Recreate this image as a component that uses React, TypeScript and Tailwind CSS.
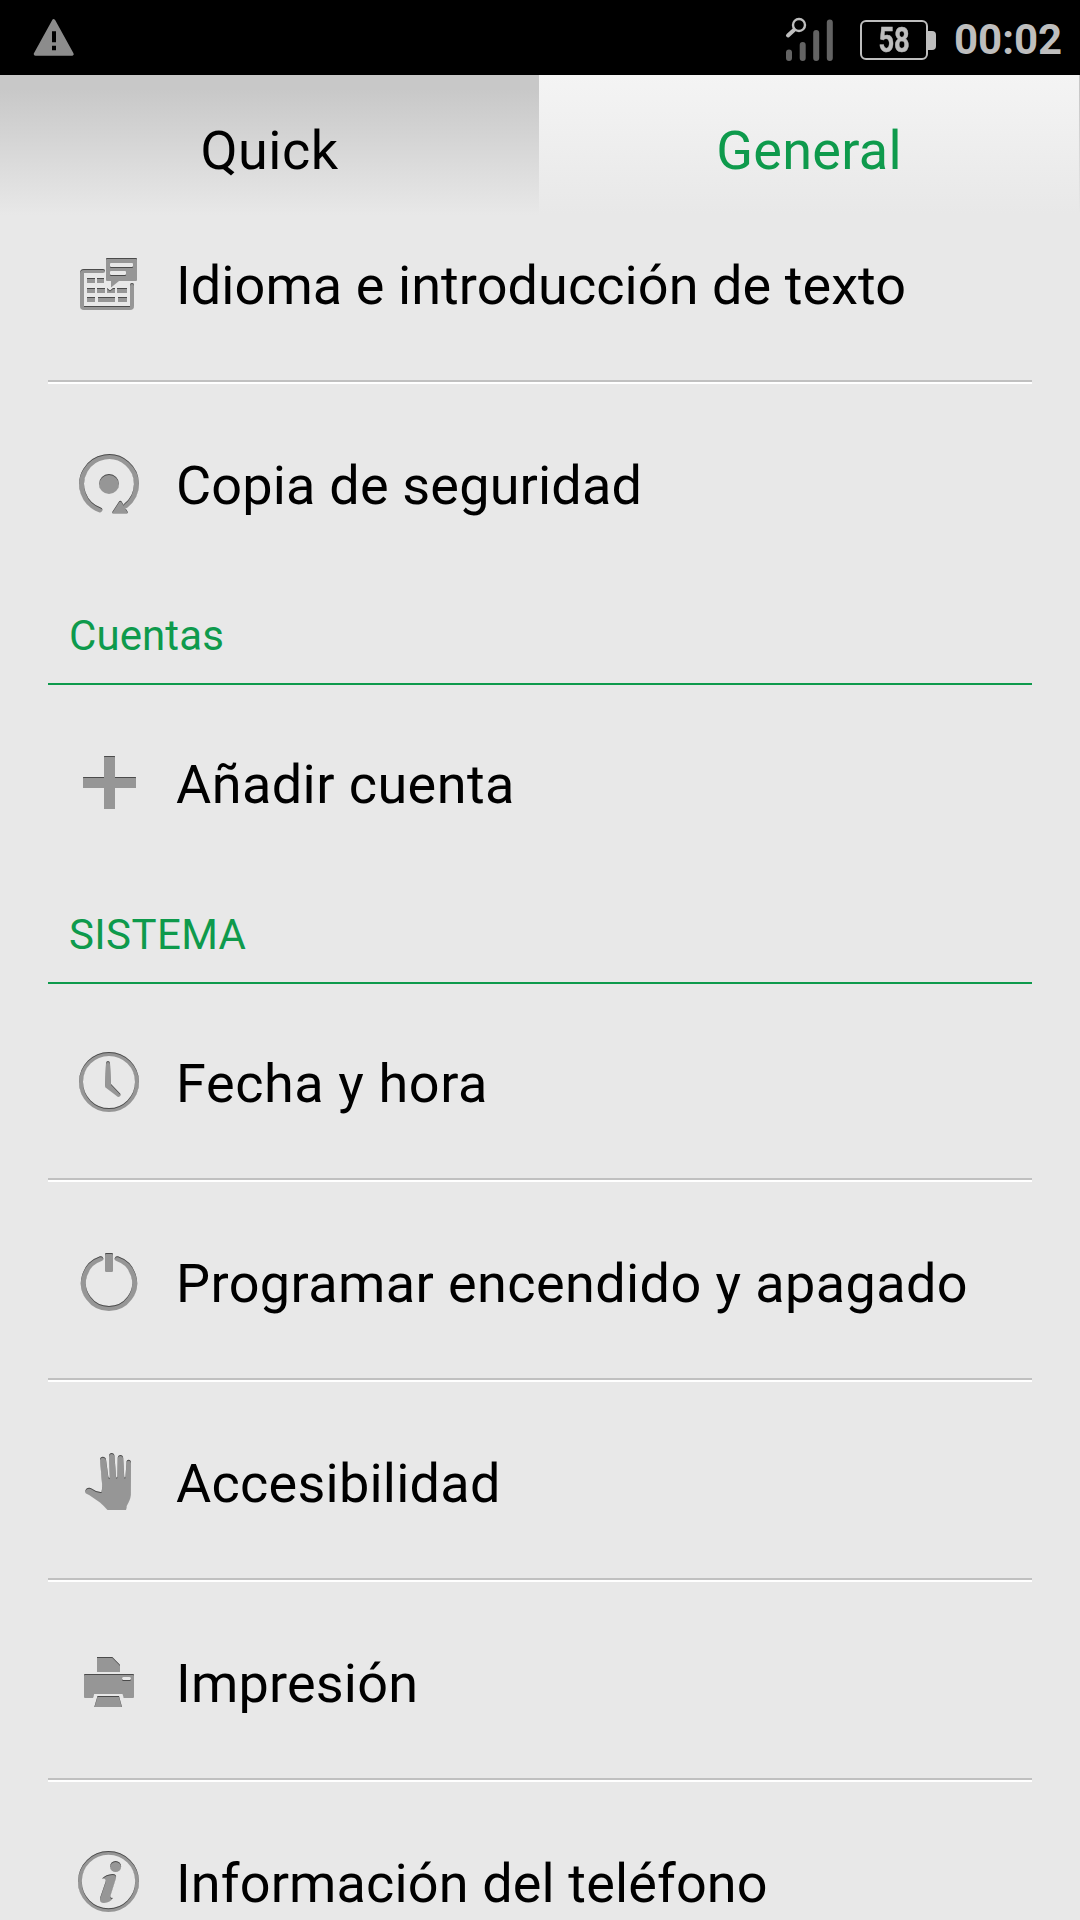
import type { ReactNode } from "react";

const GRAY = "#969696";

function Engraved({ children }: { children: ReactNode }) {
  return (
    <svg viewBox="0 0 72 72" className="size-[72px] shrink-0" fill={GRAY}>
      <g filter="url(#engrave)">{children}</g>
    </svg>
  );
}

function EngraveFilter() {
  return (
    <svg className="absolute size-0" aria-hidden="true">
      <defs>
        <filter id="engrave" x="0" y="0" width="72" height="72" filterUnits="userSpaceOnUse" colorInterpolationFilters="sRGB">
          <feOffset in="SourceAlpha" dy="1.3" result="shifted" />
          <feGaussianBlur in="shifted" stdDeviation="0.5" result="soft" />
          <feComposite in="SourceAlpha" in2="soft" operator="out" result="edge" />
          <feFlood floodColor="#000000" floodOpacity="0.5" />
          <feComposite in2="edge" operator="in" result="shade" />
          <feMerge>
            <feMergeNode in="SourceGraphic" />
            <feMergeNode in="shade" />
          </feMerge>
        </filter>
      </defs>
    </svg>
  );
}

const KeyboardIcon = () => (
  <Engraved>
    <path d="M30 23H11q-2 0-2 2V58q0 2 2 2H57q2 0 2-2V37" fill="none" stroke={GRAY} strokeWidth="4" strokeLinecap="round" />
    <path d="M14 30h8v5h-8zM24 30h7v5h-7zM14 40h8v5h-8zM24 40h8v5h-8zM34 40l3 2.5 3-2.5h2v5h-8zM44 40h10v5H44zM14 49h8v5h-8zM25 49h17v5H25zM45 49h9v5h-9z" />
    <path
      fillRule="evenodd"
      d="M34 10H63q1 0 1 1V32q0 1-1 1H46L38 39.5V33H34q-1 0-1-1V11q0-1 1-1ZM38 15q-1 0-1 1v2q0 1 1 1H59q1 0 1-1V16q0-1-1-1ZM38 23q-1 0-1 1v2q0 1 1 1H52q1 0 1-1V24q0-1-1-1Z"
    />
  </Engraved>
);

const BackupIcon = () => (
  <Engraved>
    <path d="M26.8 61.8A27.4 27.4 0 1 1 53 57.5" fill="none" stroke={GRAY} strokeWidth="5" strokeLinecap="round" />
    <circle cx="36" cy="36" r="10" />
    <path d="M40.5 64.5 47.3 54 53.5 64.5Z" stroke={GRAY} strokeWidth="2.6" strokeLinejoin="round" />
  </Engraved>
);

const PlusIcon = () => (
  <Engraved>
    <path d="M31.5 9h10q.5 0 .5.5V30H62.5q.5 0 .5.5v10q0 .5-.5.5H42V61.5q0 .5-.5.5h-10q-.5 0-.5-.5V41H10.500q-.5 0-.5-.5v-10q0-.5.5-.5H31V9.500q0-.5.5-.5Z" />
  </Engraved>
);

const ClockIcon = () => (
  <Engraved>
    <circle cx="36" cy="36" r="28" fill="none" stroke={GRAY} strokeWidth="4" />
    <path d="M33 17.5q0-2.5 2-2.5t2 2.5L38 38 47.3 47.8q.8 3-2.3 3.2L32.5 41.500Q32 41 32 39.500Z" />
  </Engraved>
);

const PowerIcon = () => (
  <Engraved>
    <path d="M27.8 12.700A25.600 25.600 0 1 0 44.200 12.700" fill="none" stroke={GRAY} strokeWidth="5" strokeLinecap="round" />
    <rect x="32" y="7" width="8" height="19" rx="1.2" />
  </Engraved>
);

const HandIcon = () => (
  <Engraved>
    <path d="M27 13.500C27 9.700 32.600 9.700 33 13.500L35.300 30.500Q36.300 33.500 36.800 31L36 10C36 6 41.300 6 41.500 10L43 30.500Q43.700 33 44.400 30.500L44.700 12C44.800 8 50.200 8 50.200 12L51.200 30.500Q52 33 52.500 30.500L53.500 16C53.700 13 58 13 58 16.500L57.600 49Q57.500 53 55.500 56.500 53 60 53 64H34.500Q31 60 27 56.500L19 51Q17 49 13 47.500C10.500 44 15 40 19 42.800Q24 46.500 28.500 46Q29.500 42 29 37Z" />
  </Engraved>
);

const PrinterIcon = () => (
  <Engraved>
    <path d="M24 11H39.3L47 18.8V26H24Z" />
    <path
      fillRule="evenodd"
      d="M12 28H60q1 0 1 1V51q0 1-1 1H50.8L49.5 48H21.2L20 52H12q-1 0-1-1V29q0-1 1-1ZM50.5 31q-1.500 0-1.500 1.500T50.500 34H56.500Q58 34 58 32.500T56.500 31Z"
    />
    <path d="M24.5 50H46L49 61H21.3Z" />
  </Engraved>
);

const InfoIcon = () => (
  <Engraved>
    <circle cx="35.5" cy="35.5" r="28.6" fill="none" stroke={GRAY} strokeWidth="3.8" />
    <circle cx="42.6" cy="20.5" r="5.5" />
    <path d="M29 32.500Q33 28.300 39.500 28Q43.800 28 43 32L37.500 49.500Q36.800 52.300 40 51.800Q37.500 56.500 31 57Q26 57 27.200 51.500L32.500 36Q33.500 32 29 32.500Z" />
  </Engraved>
);

function Row({ icon, label, tracking, last = false }: { icon: ReactNode; label: string; tracking: string; last?: boolean }) {
  return (
    <li className="relative flex h-[200px] shrink-0 items-center pl-[25px]">
      {icon}
      <span className={`ml-[31px] mt-1 whitespace-nowrap text-[54px] leading-[64px] text-black ${tracking}`}>{label}</span>
      {!last && <span className="absolute inset-x-0 bottom-0 h-1 border-t-2 border-[#c0c0c0] bg-white" />}
    </li>
  );
}

function Section({ title, tracking }: { title: string; tracking: string }) {
  return (
    <h2
      className={`relative z-10 -mb-0.5 h-[101px] shrink-0 border-b-2 border-[#0e9a4c] pl-[21px] pt-[27px] text-[42px] leading-[50px] text-[#0e9a4c] ${tracking}`}
    >
      {title}
    </h2>
  );
}

function StatusBar() {
  return (
    <header className="flex h-[75px] shrink-0 items-center bg-black text-[#bebebe]">
      <svg viewBox="0 0 44 40" className="ml-8 h-10 w-11">
        <path d="M3.5 36 21.7 3 39.9 36Z" fill="#8c8c8c" stroke="#8c8c8c" strokeWidth="3.6" strokeLinejoin="round" />
        <path d="M20 13.300h4v11h-4zM20 27.700h4v4.600h-4z" fill="#000" />
      </svg>
      <svg viewBox="0 0 50 46" className="ml-auto h-[46px] w-[50px]" strokeLinecap="round" fill="none">
        <path d="M5 37.500V43M18.700 30V43M32.200 18V43M45.800 7.500V43" stroke="#636363" strokeWidth="6" />
        <circle cx="15" cy="10" r="6" stroke="#bebebe" strokeWidth="2.4" />
        <path d="M10 15 4 20.500" stroke="#bebebe" strokeWidth="4" />
      </svg>
      <div className="ml-[26px] mt-[5px] flex items-center">
        <div className="flex h-10 w-[68px] items-center justify-center rounded-md border-2 border-[#bebebe]">
          <span className="mt-0.5 inline-block scale-x-[0.78] text-[35px] font-bold leading-[40px] [-webkit-text-stroke:0.5px_#bebebe]">58</span>
        </div>
        <span className="h-[19px] w-2 rounded-r bg-[#bebebe]" />
      </div>
      <time className="ml-[18px] mr-[18px] mt-1 w-[108px] whitespace-nowrap text-[42px] font-bold leading-[50px]">00:02</time>
    </header>
  );
}

export default function App() {
  return (
    <div className="relative flex h-[1920px] w-[1080px] flex-col overflow-hidden bg-[#e8e8e8] [font-family:Roboto,sans-serif]">
      <EngraveFilter />
      <StatusBar />
      <nav className="flex h-[109px] shrink-0 text-[54px] leading-[64px]">
        <div className="h-[140px] w-[539px] bg-linear-to-b from-[#c8c8c8] from-10% to-[#e8e8e8] pt-11 text-center tracking-[0.5px] text-black">
          Quick
        </div>
        <div className="h-[140px] w-[540px] bg-linear-to-b from-[#f4f4f4] to-[#e8e8e8] pt-11 text-center tracking-[0.3px] text-[#0e9a4c]">
          General
        </div>
        <div className="h-[140px] w-px bg-linear-to-b from-[#c8c8c8] from-10% to-[#e8e8e8]" />
      </nav>
      <main className="mx-12 flex min-h-0 flex-1 flex-col">
        <ul>
          <Row icon={<KeyboardIcon />} label="Idioma e introducción de texto" tracking="tracking-[0.08px]" />
          <Row icon={<BackupIcon />} label="Copia de seguridad" tracking="tracking-[0.18px]" last />
        </ul>
        <Section title="Cuentas" tracking="tracking-[0.1px]" />
        <ul>
          <Row icon={<PlusIcon />} label="Añadir cuenta" tracking="tracking-[0.43px]" last />
        </ul>
        <Section title="SISTEMA" tracking="tracking-[0.38px]" />
        <ul>
          <Row icon={<ClockIcon />} label="Fecha y hora" tracking="tracking-[0.6px]" />
          <Row icon={<PowerIcon />} label="Programar encendido y apagado" tracking="tracking-[0.4px]" />
          <Row icon={<HandIcon />} label="Accesibilidad" tracking="tracking-[0.25px]" />
          <Row icon={<PrinterIcon />} label="Impresión" tracking="tracking-[0.2px]" />
          <Row icon={<InfoIcon />} label="Información del teléfono" tracking="tracking-[0.14px]" last />
        </ul>
      </main>
    </div>
  );
}
